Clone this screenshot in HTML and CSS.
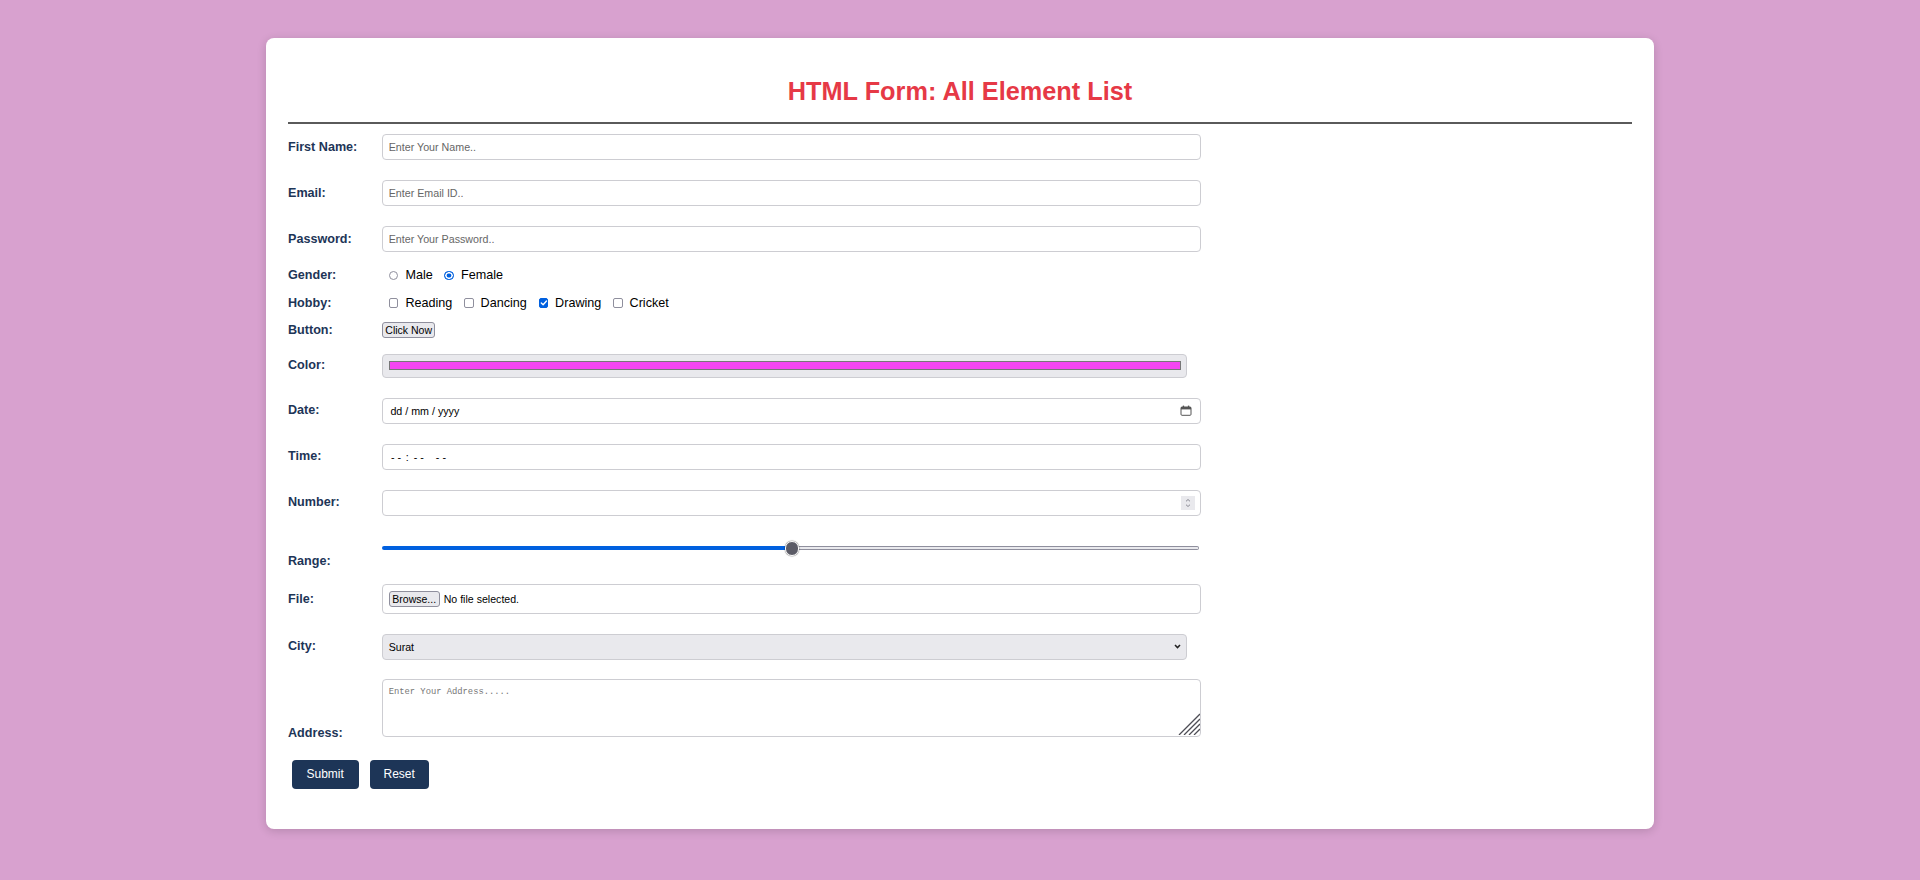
FILE: index.html
```html
<!DOCTYPE html>
<html lang="en">
<head>
<meta charset="utf-8">
<title>HTML Form: All Element List</title>
<link rel="stylesheet" href="styles.css">
</head>
<body>
<div class="card">
  <h2 class="title">HTML Form: All Element List</h2>
  <hr class="rule">
  <form class="form" onsubmit="return false">
    <div class="row row-first">
      <label class="lbl">First Name:</label>
      <input class="field" type="text" placeholder="Enter Your Name..">
    </div>
    <div class="row row-std">
      <label class="lbl">Email:</label>
      <input class="field" type="email" placeholder="Enter Email ID..">
    </div>
    <div class="row row-std">
      <label class="lbl">Password:</label>
      <input class="field" type="password" placeholder="Enter Your Password..">
    </div>
    <div class="row row-gender">
      <span class="lbl">Gender:</span>
      <div class="opts">
        <span class="opt"><span class="radio"></span>Male</span>
        <span class="opt"><span class="radio on"></span>Female</span>
      </div>
    </div>
    <div class="row row-hobby">
      <span class="lbl">Hobby:</span>
      <div class="opts">
        <span class="opt"><span class="check"></span>Reading</span>
        <span class="opt"><span class="check"></span>Dancing</span>
        <span class="opt"><span class="check on"><svg viewBox="0 0 10 10" width="10" height="10"><path d="M2.4 5.2 L4.3 7 L7.8 3.2" fill="none" stroke="#fff" stroke-width="1.4" stroke-linecap="round" stroke-linejoin="round"/></svg></span>Drawing</span>
        <span class="opt"><span class="check"></span>Cricket</span>
      </div>
    </div>
    <div class="row row-button">
      <span class="lbl">Button:</span>
      <button class="sys-btn" type="button">Click Now</button>
    </div>
    <div class="row row-color">
      <span class="lbl">Color:</span>
      <div class="color-box"><span class="swatch"></span></div>
    </div>
    <div class="row row-std">
      <span class="lbl">Date:</span>
      <div class="box box-date">
        <span>dd / mm / yyyy</span>
        <svg class="cal" viewBox="0 0 12 11" width="12" height="11"><rect x="1" y="2" width="10" height="8.3" rx="1" fill="none" stroke="#555" stroke-width="1"/><rect x="1" y="2" width="10" height="2.4" fill="#555"/><rect x="2.8" y="0.6" width="1.3" height="2" fill="#555"/><rect x="7.9" y="0.6" width="1.3" height="2" fill="#555"/></svg>
      </div>
    </div>
    <div class="row row-std">
      <span class="lbl">Time:</span>
      <div class="box box-time"><span class="dash">-</span><span class="dash">-</span><span class="sep">:</span><span class="dash">-</span><span class="dash">-</span><span class="dash d3">-</span><span class="dash">-</span></div>
    </div>
    <div class="row row-std">
      <span class="lbl">Number:</span>
      <div class="box box-number">
        <svg class="spin" viewBox="0 0 14 14" width="14" height="14"><rect width="14" height="14" fill="#e9e9ed"/><path d="M5 5.3 L7 3.5 L9 5.3" fill="none" stroke="#8a8a94" stroke-width="1"/><path d="M5 8.7 L7 10.5 L9 8.7" fill="none" stroke="#8a8a94" stroke-width="1"/></svg>
      </div>
    </div>
    <div class="row row-range">
      <span class="lbl">Range:</span>
      <div class="range">
        <span class="track-fill" style="width:50%"></span>
        <span class="track-rest"></span>
        <span class="thumb" style="left:50%"></span>
      </div>
    </div>
    <div class="row row-file">
      <span class="lbl">File:</span>
      <div class="box box-file"><span class="sys-btn browse">Browse...</span><span class="file-text">No file selected.</span></div>
    </div>
    <div class="row row-city">
      <span class="lbl">City:</span>
      <div class="select-box"><span>Surat</span><svg class="chev" viewBox="0 0 7 5" width="7" height="5"><path d="M1 1 L3.5 3.6 L6 1" fill="none" stroke="#222" stroke-width="1.5"/></svg></div>
    </div>
    <div class="row row-address">
      <span class="lbl">Address:</span>
      <div class="ta-wrap">
        <textarea class="ta" placeholder="Enter Your Address....."></textarea>
        <svg class="grip" viewBox="0 0 22 22" width="22" height="22"><path d="M22 1 L1 22 M22 6 L6 22 M22 11 L11 22 M22 16 L16 22" stroke="#4d4d55" stroke-width="1.3"/></svg>
      </div>
    </div>
    <div class="actions">
      <button class="act act-submit" type="submit">Submit</button>
      <button class="act act-reset" type="reset">Reset</button>
    </div>
  </form>
</div>
</body>
</html>
```
FILE: styles.css
```css
html, body {
  margin: 0;
  padding: 0;
}
body {
  background: #d8a1cf;
  font-family: "Liberation Sans", Arial, sans-serif;
  color: #000;
  padding-top: 37.5px;
  height: 880px;
  box-sizing: border-box;
  overflow: hidden;
}
.card {
  width: 1344px;
  margin: 0 auto;
  padding: 39.5px 22px 40.6px;
  background: #fff;
  border-radius: 8px;
  box-shadow: 0 2px 10px rgba(0, 0, 0, 0.16);
}
.title {
  margin: 0;
  text-align: center;
  color: #e63946;
  font-size: 25.3px;
  line-height: 29px;
  font-weight: bold;
}
.rule {
  margin: 15.7px 0 0;
  border: 0;
  height: 2px;
  background: #5a5a5a;
}
.form {
  margin: 0;
}
.row {
  display: flex;
  align-items: center;
}
.row-first { margin-top: 10.8px; }
.row-std { margin-top: 20px; }
.row-gender { margin-top: 15.6px; height: 15px; }
.row-hobby { margin-top: 12.5px; height: 15px; }
.row-button { margin-top: 11.5px; }
.row-color { margin-top: 15.7px; }
.row-range { margin-top: 25.6px; height: 27.8px; align-items: flex-end; }
.row-file { margin-top: 15.2px; }
.row-city { margin-top: 19.2px; }
.row-address { margin-top: 19.6px; height: 61.5px; align-items: flex-end; }

.lbl {
  flex: none;
  width: 94px;
  font-weight: bold;
  font-size: 12.6px;
  line-height: 15px;
  color: #1d3557;
}
.field,
.box {
  width: 819.4px;
  height: 26px;
  box-sizing: border-box;
  border: 1px solid #cdcdd2;
  border-radius: 4px;
  background: #fff;
  font-family: "Liberation Sans", Arial, sans-serif;
  font-size: 10.7px;
  color: #000;
}
.field {
  padding: 0 5.7px;
  outline: none;
}
.field::placeholder {
  color: #666;
  opacity: 1;
}
.box {
  display: flex;
  align-items: center;
  padding: 0 7.4px;
}
.box-date {
  justify-content: space-between;
  padding-right: 8.7px;
}
.cal { display: block; }
.box-time {
  padding-left: 8px;
}
.box-time .dash {
  display: inline-block;
  width: 3.6px;
  margin-right: 3px;
}
.box-time .sep {
  margin: 0 5px 0 1.5px;
}
.box-time .d3 {
  margin-left: 9px;
}
.box-number {
  justify-content: flex-end;
  padding-right: 5.7px;
}
.spin { display: block; }

.opts {
  display: flex;
  align-items: center;
  gap: 11.7px;
  padding-left: 6.8px;
  font-size: 12.6px;
  line-height: 15px;
}
.opt {
  display: flex;
  align-items: center;
}
.radio,
.check {
  flex: none;
  width: 9.6px;
  height: 9.6px;
  box-sizing: border-box;
  border: 1px solid #8f8f9d;
  background: #fff;
  margin-right: 7px;
  position: relative;
}
.radio {
  border-radius: 50%;
}
.radio.on {
  border: 1px solid #0060df;
  box-shadow: inset 0 0 0 1.6px #fff;
  background: #0060df;
}
.check {
  border-radius: 2px;
}
.check.on {
  border-color: #0060df;
  background: #0060df;
}
.check svg {
  position: absolute;
  left: -1px;
  top: -1px;
  width: 9.6px;
  height: 9.6px;
}
.sys-btn {
  box-sizing: border-box;
  height: 16px;
  width: 53.4px;
  padding: 0;
  margin: 0;
  background: #e9e9ed;
  border: 1px solid #8f8f9d;
  border-radius: 3px;
  font-family: "Liberation Sans", Arial, sans-serif;
  font-size: 10.5px;
  color: #000;
  line-height: 14px;
  text-align: center;
}
.color-box {
  width: 805px;
  height: 24px;
  box-sizing: border-box;
  background: #e9e9ed;
  border: 1px solid #cdcdd2;
  border-radius: 4px;
  padding: 6px 5.3px 6.3px 5.7px;
  display: flex;
}
.swatch {
  flex: 1;
  background: #f445f2;
  border: 1px solid #777;
}
.range {
  position: relative;
  align-self: flex-start;
  width: 819.4px;
  height: 14px;
  display: flex;
  align-items: center;
}
.track-fill {
  height: 4px;
  background: #0060df;
  border-radius: 2px 0 0 2px;
}
.track-rest {
  flex: 1;
  height: 4px;
  box-sizing: border-box;
  background: #e9e9ed;
  border: 1px solid #8f8f9d;
  border-left: 0;
  border-radius: 0 2px 2px 0;
  margin-right: 2px;
}
.thumb {
  position: absolute;
  width: 14.4px;
  height: 14.4px;
  margin-left: -7px;
  top: -0.2px;
  box-sizing: border-box;
  border-radius: 50%;
  background: #5b5b66;
  border: 1.5px solid #fff;
  box-shadow: 0 0 1px 0.5px rgba(0, 0, 0, 0.35);
}
.box-file {
  height: 30px;
  padding-left: 5.7px;
}
.browse {
  display: inline-block;
  width: 51px;
  margin-right: 4px;
}
.file-text {
  font-size: 10.6px;
}
.select-box {
  width: 805px;
  height: 26px;
  box-sizing: border-box;
  background: #e9e9ed;
  border: 1px solid #cdcdd2;
  border-radius: 4px;
  padding: 0 5px 0 5.7px;
  display: flex;
  align-items: center;
  justify-content: space-between;
  font-size: 10.6px;
}
.chev { display: block; }
.ta-wrap {
  position: relative;
  align-self: flex-start;
  display: flex;
}
.ta {
  width: 819.4px;
  height: 57.4px;
  box-sizing: border-box;
  border: 1px solid #cdcdd2;
  border-radius: 4px;
  padding: 6.7px 5.7px;
  margin: 0;
  resize: none;
  outline: none;
  font-family: "Liberation Mono", "DejaVu Sans Mono", monospace;
  font-size: 8.8px;
  line-height: 10px;
  display: block;
}
.ta::placeholder {
  color: #767676;
  opacity: 1;
}
.grip {
  position: absolute;
  right: 1.5px;
  bottom: 1.5px;
}
.actions {
  display: flex;
  gap: 11px;
  margin-top: 19.2px;
  padding-left: 3.7px;
}
.act {
  height: 28.7px;
  padding: 0;
  margin: 0;
  border: 0;
  border-radius: 4px;
  background: #1d3557;
  color: #fff;
  font-family: "Liberation Sans", Arial, sans-serif;
  font-size: 12px;
  text-align: center;
}
.act-submit { width: 67px; }
.act-reset { width: 59px; }
```
